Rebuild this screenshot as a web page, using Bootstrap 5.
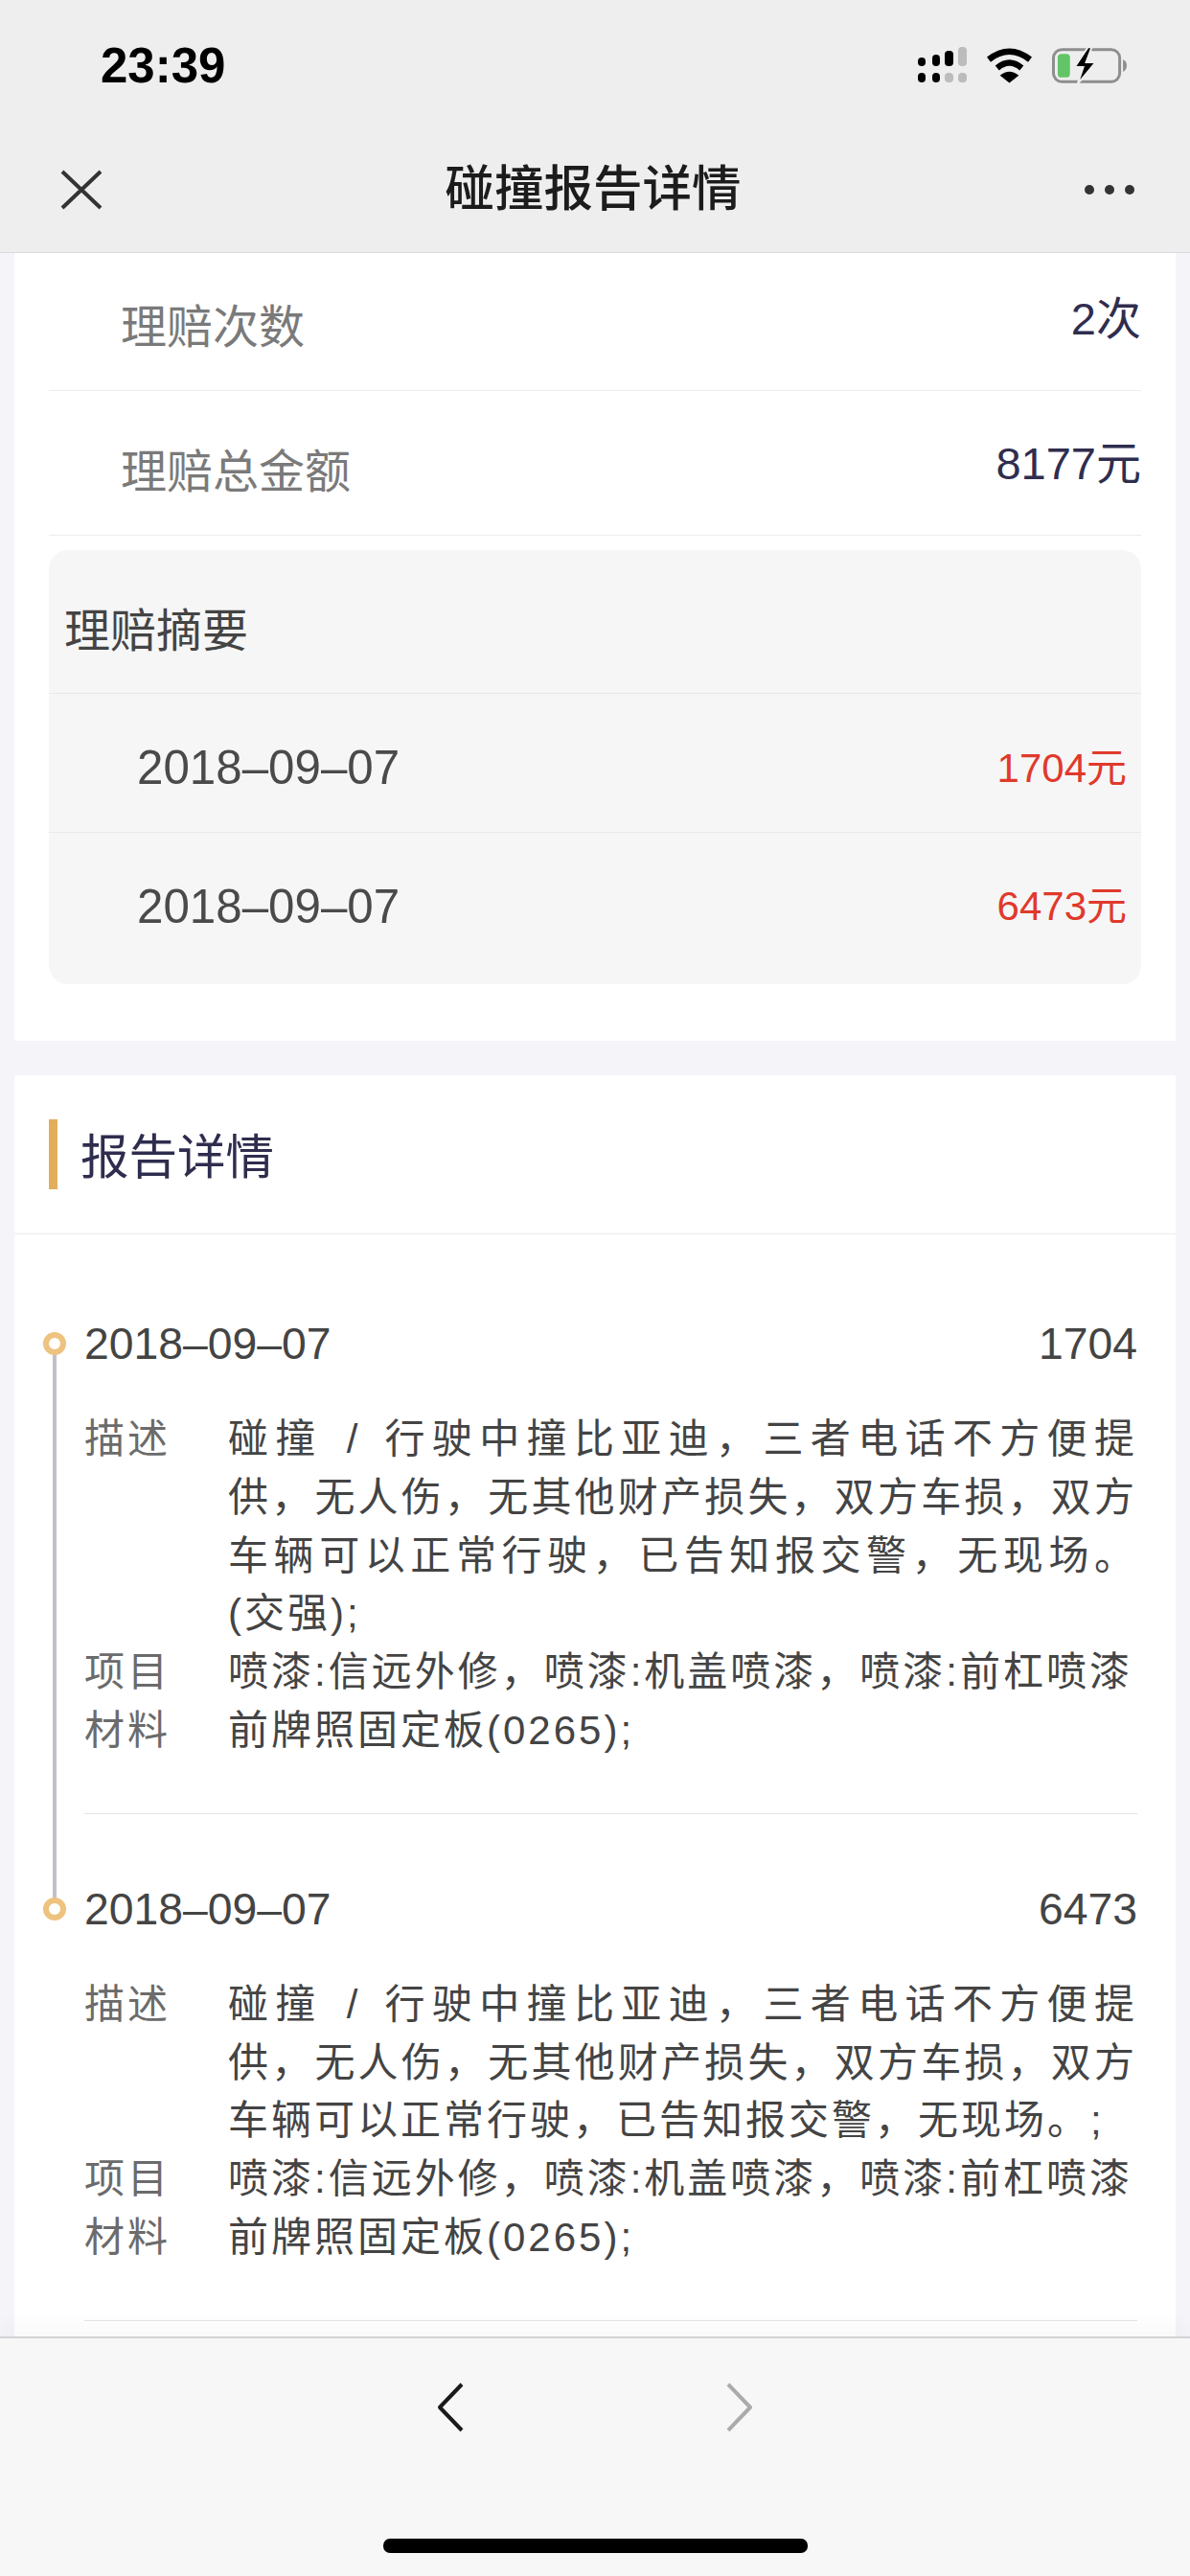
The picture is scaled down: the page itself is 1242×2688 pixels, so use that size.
<!DOCTYPE html>
<html lang="zh">
<head>
  <meta charset="UTF-8" />
  <meta name="viewport" content="width=device-width, initial-scale=1" />
  <title>碰撞报告详情</title>
  <link href="https://cdn.jsdelivr.net/npm/bootstrap@5.3.3/dist/css/bootstrap.min.css" rel="stylesheet" />
  <style>
    body { width: 1242px; height: 2688px; background: #f4f4f9; font-family: "Liberation Sans", "Noto Sans CJK SC", sans-serif; color: #444; }
    .top-head { height: 264px; background: #eeeeef; border-bottom: 1px solid #d9d9db; }
    .status-row { height: 130px; padding: 6px 65px 0 105px; }
    .clock { font-size: 51px; font-weight: 700; color: #000; line-height: 1; }
    .status-icons { gap: 21px; }
    .nav-row { height: 133px; padding: 2px 57px 0 63px; }
    .nav-title { font-size: 51.5px; font-weight: 500; color: #1c1c1c; line-height: 1; }
    .scroll-area { min-height: 0; }
    .scroll-inner { margin-top: -7px; }
    .sheet { margin: 0 15px; background: #fff; }
    .sheet-one { padding: 0 36px 59px; margin-bottom: 36px; }
    .info-row { height: 151px; border-bottom: 1px solid #ececec; }
    .info-label { padding: 20px 0 0 75px; font-size: 48px; color: #7a7a7a; }
    .info-value { font-size: 47px; color: #2f2d4e; padding-top: 2px; }
    .claim-box { margin-top: 15px; background: #f6f6f7; border-radius: 20px; padding-bottom: 15px; }
    .claim-title { height: 150px; padding: 20px 0 0 16px; font-size: 48px; color: #444; border-bottom: 1px solid #e8e8e8; }
    .claim-row { height: 144px; padding: 10px 15px 0 92px; }
    .claim-row + .claim-row { border-top: 1px solid #e8e8e8; }
    .claim-date { font-size: 49.3px; color: #4a4a4a; }
    .claim-money { font-size: 42px; color: #e0392b; }
    .sheet-head { height: 166px; border-bottom: 1px solid #ececec; padding-left: 36px; gap: 24px; }
    .head-bar { width: 9px; height: 73px; background: #e3ae5c; }
    .head-text { font-size: 50.5px; color: #2f2d4e; padding-top: 6px; }
    .time-list { padding: 84px 40px 0 73px; }
    .time-item { position: relative; padding-bottom: 69px; }
    .time-dot { position: absolute; left: -43px; top: 18px; width: 24px; height: 24px; border: 6px solid #eec27f; border-radius: 50%; background: #fff; z-index: 1; }
    .time-line { position: absolute; left: -33px; top: 30px; width: 4px; height: 100%; background: #c0c0c8; }
    .time-top { height: 60px; line-height: 60px; margin-bottom: 40px; font-size: 46.3px; color: #444; }
    .detail-row { font-size: 42px; line-height: 60.8px; letter-spacing: 3px; }
    .detail-key { flex: 0 0 150px; color: #6b6b6b; }
    .detail-val { flex: 1; color: #444; text-align: justify; word-spacing: 6px; }
    .time-sep { height: 1px; background: #e4e4e4; margin-top: 55px; }
    .bottom-bar { height: 250px; background: #f7f7f7; border-top: 2px solid #d2d2d6; padding-top: 45px; box-shadow: 0 -14px 16px rgba(0, 0, 0, .025); position: relative; }
    .arrow-row { gap: 272px; }
    .home-bar { width: 443px; height: 15px; margin-top: 110px; background: #000; border-radius: 7px; }
  </style>
</head>
<body class="d-flex flex-column overflow-hidden">

  <!-- 顶部 -->
  <div class="top-head flex-shrink-0">
    <div class="status-row d-flex justify-content-between align-items-center">
      <span class="clock">23:39</span>
      <div class="status-icons d-flex align-items-center">
        <svg width="51" height="38" viewBox="0 0 51 38">
          <rect x="0" y="11" width="8" height="9" rx="4" fill="#000"/>
          <rect x="15" y="8" width="8" height="12" rx="4" fill="#000"/>
          <rect x="28" y="4" width="9" height="16" rx="4" fill="#000"/>
          <rect x="42" y="0" width="9" height="20" rx="4" fill="#bcbcbc"/>
          <rect x="0" y="27" width="8" height="10" rx="4" fill="#000"/>
          <rect x="15" y="27" width="8" height="10" rx="4" fill="#000"/>
          <rect x="28" y="27" width="9" height="10" rx="4" fill="#bcbcbc"/>
          <rect x="42" y="27" width="9" height="10" rx="4" fill="#bcbcbc"/>
        </svg>
        <svg width="47" height="37" viewBox="0 0 48 37">
          <path d="M2 12 Q24 -5 46 12" fill="none" stroke="#000" stroke-width="6.5"/>
          <path d="M11 21 Q24 10 37 21" fill="none" stroke="#000" stroke-width="6.5"/>
          <path d="M14 29 Q24 21 34 29 L24 37 Z" fill="#000"/>
        </svg>
        <svg width="79" height="37" viewBox="0 0 80 37">
          <rect x="1.5" y="1.5" width="70" height="34" rx="9" fill="none" stroke="#8e8e8e" stroke-width="3"/>
          <path d="M75 12 Q79 14 79 18.5 Q79 23 75 25 Z" fill="#8e8e8e"/>
          <rect x="6" y="6" width="13" height="25" rx="4" fill="#62c466"/>
          <path d="M38 -1 L24 20 L33 20 L27 38 L46 15 L36 15 L42 -1 Z" fill="#000" stroke="#eeeeef" stroke-width="2"/>
        </svg>
      </div>
    </div>
    <div class="nav-row d-flex justify-content-between align-items-center">
      <svg width="44" height="42" viewBox="0 0 44 42">
        <path d="M2 2 L42 40 M42 2 L2 40" stroke="#333" stroke-width="4" fill="none"/>
      </svg>
      <span class="nav-title">碰撞报告详情</span>
      <svg width="54" height="12" viewBox="0 0 54 12">
        <circle cx="6" cy="6" r="5" fill="#333"/>
        <circle cx="27" cy="6" r="5" fill="#333"/>
        <circle cx="48" cy="6" r="5" fill="#333"/>
      </svg>
    </div>
  </div>

  <!-- 内容 -->
  <div class="scroll-area flex-grow-1 overflow-hidden">
    <div class="scroll-inner">

      <div class="sheet sheet-one">
        <div class="info-row d-flex justify-content-between align-items-center">
          <span class="info-label">理赔次数</span>
          <span class="info-value">2次</span>
        </div>
        <div class="info-row d-flex justify-content-between align-items-center">
          <span class="info-label">理赔总金额</span>
          <span class="info-value">8177元</span>
        </div>
        <div class="claim-box">
          <div class="claim-title d-flex align-items-center">理赔摘要</div>
          <div class="claim-row d-flex justify-content-between align-items-center">
            <span class="claim-date">2018–09–07</span>
            <span class="claim-money">1704元</span>
          </div>
          <div class="claim-row d-flex justify-content-between align-items-center">
            <span class="claim-date">2018–09–07</span>
            <span class="claim-money">6473元</span>
          </div>
        </div>
      </div>

      <div class="sheet">
        <div class="sheet-head d-flex align-items-center">
          <span class="head-bar"></span>
          <span class="head-text">报告详情</span>
        </div>
        <div class="time-list">

          <div class="time-item">
            <span class="time-line"></span>
            <span class="time-dot"></span>
            <div class="time-top d-flex justify-content-between">
              <span>2018–09–07</span>
              <span>1704</span>
            </div>
            <div class="detail-row d-flex">
              <div class="detail-key">描述</div>
              <div class="detail-val">碰撞 / 行驶中撞比亚迪，三者电话不方便提供，无人伤，无其他财产损失，双方车损，双方车辆可以正常行驶，已告知报交警，无现场。(交强);</div>
            </div>
            <div class="detail-row d-flex">
              <div class="detail-key">项目</div>
              <div class="detail-val">喷漆:信远外修，喷漆:机盖喷漆，喷漆:前杠喷漆</div>
            </div>
            <div class="detail-row d-flex">
              <div class="detail-key">材料</div>
              <div class="detail-val">前牌照固定板(0265);</div>
            </div>
            <div class="time-sep"></div>
          </div>

          <div class="time-item">
            <span class="time-dot"></span>
            <div class="time-top d-flex justify-content-between">
              <span>2018–09–07</span>
              <span>6473</span>
            </div>
            <div class="detail-row d-flex">
              <div class="detail-key">描述</div>
              <div class="detail-val">碰撞 / 行驶中撞比亚迪，三者电话不方便提供，无人伤，无其他财产损失，双方车损，双方车辆可以正常行驶，已告知报交警，无现场。;</div>
            </div>
            <div class="detail-row d-flex">
              <div class="detail-key">项目</div>
              <div class="detail-val">喷漆:信远外修，喷漆:机盖喷漆，喷漆:前杠喷漆</div>
            </div>
            <div class="detail-row d-flex">
              <div class="detail-key">材料</div>
              <div class="detail-val">前牌照固定板(0265);</div>
            </div>
            <div class="time-sep"></div>
          </div>

        </div>
      </div>

    </div>
  </div>

  <!-- 底部 -->
  <div class="bottom-bar flex-shrink-0 d-flex flex-column align-items-center">
    <div class="arrow-row d-flex">
      <svg width="30" height="54" viewBox="0 0 30 54">
        <path d="M27 3 L4 27 L27 51" fill="none" stroke="#1a1a1a" stroke-width="4" stroke-linejoin="round"/>
      </svg>
      <svg width="30" height="54" viewBox="0 0 30 54">
        <path d="M3 3 L26 27 L3 51" fill="none" stroke="#ababab" stroke-width="4" stroke-linejoin="round"/>
      </svg>
    </div>
    <div class="home-bar"></div>
  </div>

  <script src="https://cdn.jsdelivr.net/npm/bootstrap@5.3.3/dist/js/bootstrap.bundle.min.js"></script>
</body>
</html>
